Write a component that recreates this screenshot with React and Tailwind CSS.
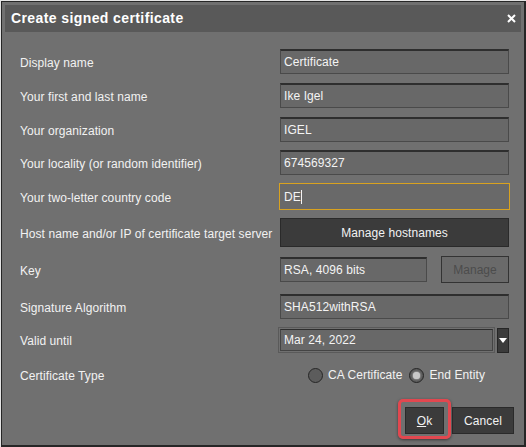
import React from "react";

const font = { fontFamily: '"Liberation Sans", Arial, sans-serif' };

function Label({ children }) {
  return <div className="w-[260px] shrink-0 pt-[2px] text-[12px] tracking-[0.08px] text-[#f2f2f2]">{children}</div>;
}

function Input({ value, w = "w-[229px]" }) {
  return (
    <div className={`${w} h-[25px] flex items-center bg-[#686868] border border-[#4a4a4a] border-t-[#2e2e2e] border-t-2 px-[3px] text-[12px] tracking-[0.08px] text-[#f4f4f4]`}>
      {value}
    </div>
  );
}

function Radio({ checked, label }) {
  return (
    <div className="flex items-center gap-[5px]">
      <div className="w-[15px] h-[15px] rounded-full border border-[#262626] bg-[#5c5c5c] flex items-center justify-center">
        {checked && <div className="w-[7px] h-[7px] rounded-full bg-[#c8c8c8] shadow-[0_0_2px_#eee]" />}
      </div>
      <span className="text-[12px] tracking-[0.08px] text-[#f2f2f2]">{label}</span>
    </div>
  );
}

export default function App() {
  return (
    <div style={font} className="w-[526px] h-[447px] bg-[#e4e4e4] pt-px pl-px">
      <div className="w-[525px] h-[446px] border border-[#262626] border-r-2 border-b-2 bg-[#707070] p-[3px] flex flex-col">
        <div className="h-[27px] bg-[#595959] flex items-center justify-between pl-[6px] pr-[5px]">
          <span className="text-[14px] font-bold tracking-[0.4px] text-white">Create signed certificate</span>
          <svg width="9" height="9" viewBox="0 0 9 9">
            <path d="M1 1L8 8M8 1L1 8" stroke="#fff" strokeWidth="2" />
          </svg>
        </div>
        <div className="flex flex-col pl-[15px] pt-[17px]">
          <div className="flex items-center h-[25px]">
            <Label>Display name</Label>
            <Input value="Certificate" />
          </div>
          <div className="flex items-center h-[25px] mt-[9px]">
            <Label>Your first and last name</Label>
            <Input value="Ike Igel" />
          </div>
          <div className="flex items-center h-[25px] mt-[9px]">
            <Label>Your organization</Label>
            <Input value="IGEL" />
          </div>
          <div className="flex items-center h-[25px] mt-[8px]">
            <Label>Your locality (or random identifier)</Label>
            <Input value="674569327" />
          </div>
          <div className="flex items-center h-[27px] mt-[8px]">
            <Label>Your two-letter country code</Label>
            <div className="w-[231px] -ml-px h-[27px] flex items-center bg-[#696969] border border-[#d9a21f] px-[4px] text-[12px] text-[#f4f4f4]">
              DE<span className="inline-block w-px h-[14px] bg-[#f4f4f4]" />
            </div>
          </div>
          <div className="flex items-center h-[29px] mt-[8px]">
            <Label>Host name and/or IP of certificate target server</Label>
            <div className="w-[229px] h-[29px] flex items-center justify-center bg-[#3b3b3b] border border-[#2a2a2a] text-[12px] tracking-[0.08px] text-[#f2f2f2]">
              Manage hostnames
            </div>
          </div>
          <div className="flex items-center h-[27px] mt-[9px]">
            <Label>Key</Label>
            <Input value="RSA, 4096 bits" w="w-[147px]" />
            <div className="ml-[14px] w-[68px] h-[27px] flex items-center justify-center bg-[#6a6a6a] border border-[#333] text-[12px] text-[#4c4c4c]">
              Manage
            </div>
          </div>
          <div className="flex items-center h-[25px] mt-[11px]">
            <Label>Signature Algorithm</Label>
            <Input value="SHA512withRSA" />
          </div>
          <div className="flex items-center h-[26px] mt-[8px]">
            <Label>Valid until</Label>
            <div className="-ml-[2px] w-[217px] h-[26px] border border-[#5a5a5a] p-px">
              <div className="w-full h-full flex items-center bg-[#686868] border border-[#444] border-t-[#2e2e2e] px-[3px] text-[12px] tracking-[0.08px] text-[#f4f4f4]">
                Mar 24, 2022
              </div>
            </div>
            <div className="ml-[2px] w-[12px] h-[25px] bg-[#3b3b3b] border border-[#262626] flex items-center justify-center">
              <svg width="8" height="5" viewBox="0 0 8 5">
                <path d="M0 0H8L4 5Z" fill="#fff" />
              </svg>
            </div>
          </div>
          <div className="flex items-center h-[18px] mt-[13px]">
            <Label>Certificate Type</Label>
            <div className="flex items-center gap-[7px] ml-[28px]">
              <Radio label="CA Certificate" />
              <Radio checked label="End Entity" />
            </div>
          </div>
        </div>
        <div className="flex justify-end items-center pr-[7px] mt-[15px]">
          <div className="border-[3px] border-[#e2474f] rounded-[5px] pt-[5px] pb-[2px] px-[4px] shadow-[0_1px_3px_rgba(0,0,0,0.5)]">
            <div className="w-[39px] h-[27px] flex items-center justify-center bg-[#3b3b3b] border border-[#2a2a2a] text-[12px] text-[#f2f2f2]">
              <span><span className="underline">O</span>k</span>
            </div>
          </div>
          <div className="ml-px mt-[3px] w-[62px] h-[27px] flex items-center justify-center bg-[#3b3b3b] border border-[#2a2a2a] text-[12px] tracking-[0.08px] text-[#f2f2f2]">
            Cancel
          </div>
        </div>
      </div>
    </div>
  );
}
